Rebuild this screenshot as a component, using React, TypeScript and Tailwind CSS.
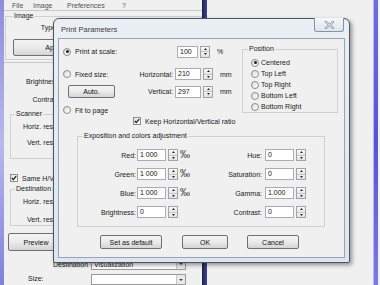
import { ReactNode } from "react";

const Radio = ({ checked = false }: { checked?: boolean }) => (
  <span className="flex h-[8px] w-[8px] shrink-0 items-center justify-center rounded-full border border-[#8c8c8c] bg-linear-to-br from-[#dcdcdc] to-white">
    {checked && <span className="h-[3px] w-[3px] rounded-full bg-[#1e1e1e]" />}
  </span>
);

const Check = () => (
  <span className="flex h-[8px] w-[8px] shrink-0 items-center justify-center border border-[#8e8f8f] bg-linear-to-br from-[#e2e2e2] to-white">
    <svg width="6" height="6" viewBox="0 0 6 6">
      <path d="M0.8 3 L2.3 4.6 L5.2 1.2" stroke="#1c1c1c" strokeWidth="1.3" fill="none" />
    </svg>
  </span>
);

const Arrows = () => (
  <div className="flex h-full w-[10px] shrink-0 flex-col border border-[#a3a3a3] bg-[#f4f4f4]">
    <div className="flex flex-1 items-center justify-center border-b border-[#c4c4c4] bg-linear-to-b from-[#fbfbfb] to-[#e6e6e6]">
      <svg width="3" height="2" viewBox="0 0 3 2">
        <path d="M1.5 0 L3 2 L0 2 Z" fill="#2a2a2a" />
      </svg>
    </div>
    <div className="flex flex-1 items-center justify-center bg-linear-to-b from-[#f4f4f4] to-[#e0e0e0]">
      <svg width="3" height="2" viewBox="0 0 3 2">
        <path d="M0 0 L3 0 L1.5 2 Z" fill="#2a2a2a" />
      </svg>
    </div>
  </div>
);

const Spin = ({ value, editClass }: { value: string; editClass: string }) => (
  <div className="flex h-[12px] shrink-0 gap-[2px]">
    <div className={"h-full border border-[#abadb3] bg-white pl-[2px] leading-[10px] text-[#111] " + editClass}>
      {value}
    </div>
    <Arrows />
  </div>
);

const Btn = ({ children, className }: { children: ReactNode; className: string }) => (
  <div
    className={
      "flex shrink-0 items-center justify-center rounded-[2px] border border-[#707070] bg-linear-to-b from-[#f3f3f3] via-[#ebebeb] to-[#d4d4d4] text-[#111] " +
      className
    }
  >
    {children}
  </div>
);

const Combo = ({ value }: { value: string }) => (
  <div className="flex h-[11px] w-[95px] items-center border border-[#9a9a9a] bg-white pl-[2px] text-[#222]">
    <span className="flex-1">{value}</span>
    <span className="flex h-full w-[9px] items-center justify-center border-l border-[#c8c8c8] bg-[#eaeaea]">
      <svg width="4" height="2" viewBox="0 0 4 2">
        <path d="M0 0 L4 0 L2 2 Z" fill="#444" />
      </svg>
    </span>
  </div>
);

const ColorRow = ({
  left,
  leftValue,
  unit,
  right,
  rightValue,
  className,
}: {
  left: string;
  leftValue: string;
  unit: boolean;
  right: string;
  rightValue: string;
  className: string;
}) => (
  <div className={"flex h-[12px] items-center " + className}>
    <div className="flex w-[125px] items-center">
      <span className="w-[53px] text-right">{left}</span>
      <div className="ml-[1px]">
        <Spin value={leftValue} editClass="w-[29px]" />
      </div>
      {unit && <span className="ml-[2px] text-[10px] leading-[10px] text-[#333]">‰</span>}
    </div>
    <span className="w-[54px] text-right">{right}</span>
    <div className="ml-[3px]">
      <Spin value={rightValue} editClass="w-[29px]" />
    </div>
  </div>
);

export default function App() {
  return (
    <div className="relative flex h-[285px] w-[380px] overflow-hidden bg-[#f0f0f0] font-['Liberation_Sans',Arial,sans-serif] text-[7px] leading-none text-[#1a1a1a]">
      {/* background application */}
      <div className="h-full w-[4px] shrink-0 bg-linear-to-b from-[#8d8fd8] via-[#b7b9ec] to-[#7f82d6]" />
      <div className="flex w-[198px] shrink-0 flex-col">
        <div className="flex h-[11px] items-center border-b border-[#c9c9c9] pl-[8px] text-[#505050]">
          <span className="w-[21px]">File</span>
          <span className="w-[34px]">Image</span>
          <span className="w-[55px]">Preferences</span>
          <span>?</span>
        </div>
        <fieldset className="ml-[1px] mt-[1px] border border-[#d0d0d0] px-[7px] pb-[3px]">
          <legend className="px-[1px] leading-[8px]">Image</legend>
          <div className="mt-[2px] flex h-[10px] items-center">
            <span className="w-[43px] text-right">Type</span>
          </div>
          <Btn className="mt-[7px] h-[17px] w-[82px]">Apply</Btn>
        </fieldset>
        <div className="mt-[2px] h-px bg-[#c8c8c8]" />
        <div className="mt-[13px] flex h-[10px] items-center">
          <span className="w-[55px] text-right">Brightness</span>
        </div>
        <div className="mt-[8px] flex h-[10px] items-center">
          <span className="w-[55px] text-right">Contrast</span>
        </div>
        <fieldset className="ml-[6px] mt-[6px] border border-[#d0d0d0] px-[4px] pb-[11px]">
          <legend className="px-[1px] leading-[8px]">Scanner</legend>
          <div className="mt-[3px] flex h-[10px] items-center pl-[8px]">Horiz. resolution</div>
          <div className="mt-[6px] flex h-[10px] items-center pl-[12px]">Vert. resolution</div>
        </fieldset>
        <div className="mt-[14px] flex h-[10px] items-center gap-[4px] pl-[6px]">
          <Check />
          <span>Same H/V resolution</span>
        </div>
        <fieldset className="ml-[6px] mt-[2px] border border-[#d0d0d0] px-[4px] pb-[1px]">
          <legend className="px-[1px] leading-[8px]">Destination</legend>
          <div className="mt-[3px] flex h-[10px] items-center pl-[8px]">Horiz. resolution</div>
          <div className="mt-[8px] flex h-[10px] items-center pl-[12px]">Vert. resolution</div>
        </fieldset>
        <Btn className="ml-[4px] mt-[7px] h-[18px] w-[56px]">Preview</Btn>
        <div className="mt-[8px] flex h-[10px] items-center">
          <span className="w-[87px] pl-[49px]">Destination</span>
          <Combo value="Visualization" />
        </div>
        <div className="mt-[5px] flex h-[10px] items-start">
          <span className="w-[85px] pl-[24px] pt-[1px]">Size:</span>
          <div className="ml-[2px]">
            <Combo value="" />
          </div>
        </div>
      </div>
      <div className="h-full w-[5px] shrink-0 bg-linear-to-r from-[#1c2040] via-[#2e3470] to-[#3d4290]" />
      <div className="h-full flex-1" />
      <div className="h-full w-[5px] shrink-0 border-l border-[#b8b6f0] bg-linear-to-b from-[#6f6ce0] via-[#5656d6] to-[#7c7ae2]" />
      <div className="h-full w-[2px] shrink-0" />

      {/* dialog window */}
      <div className="absolute left-[53px] top-[18px] flex h-[245px] w-[297px] flex-col rounded-t-[6px] rounded-b-[2px] border border-[#4d5561] bg-linear-to-b from-[#eaeff5] to-[#dde5ee] px-[4px] pb-[4px] shadow-[2px_2px_4px_rgba(0,0,0,0.4)]">
        <div className="flex h-[19px] shrink-0 items-start">
          <span className="ml-[3px] mt-[7px] text-[7.5px] text-[#3a3a3a]">Print Parameters</span>
          <div className="ml-auto mr-[1px] mt-[-1px] flex h-[14px] w-[30px] items-center justify-center rounded-b-[3px] border border-t-0 border-[#8593a4] bg-linear-to-b from-[#f5f7fa] to-[#dfe5ec]">
            <svg width="9" height="8" viewBox="0 0 9 8">
              <path
                d="M1 1 L8 7 M8 1 L1 7"
                stroke="#8a96a6"
                strokeWidth="2.2"
                strokeLinecap="square"
              />
              <path d="M1 1 L8 7 M8 1 L1 7" stroke="#f4f6f8" strokeWidth="0.9" />
            </svg>
          </div>
        </div>
        <div className="flex flex-1 flex-col border border-[#98a4b4] bg-[#f0f0f0]">
          {/* top block */}
          <div className="flex">
            <div className="flex w-[183px] flex-col pl-[4px] pt-[6px]">
              <div className="flex h-[13px] items-center">
                <div className="flex w-[114px] items-center gap-[4px]">
                  <Radio checked />
                  <span>Print at scale:</span>
                </div>
                <Spin value="100" editClass="w-[21px]" />
                <span className="ml-[7px]">%</span>
              </div>
              <div className="mt-[10px] flex h-[12px] items-center">
                <div className="flex w-[70px] items-center gap-[4px]">
                  <Radio />
                  <span>Fixed size:</span>
                </div>
                <span className="w-[40px] text-right">Horizontal:</span>
                <div className="ml-[2px]">
                  <Spin value="210" editClass="w-[26px]" />
                </div>
                <span className="ml-[7px]">mm</span>
              </div>
              <div className="mt-[5px] flex h-[13px] items-center">
                <Btn className="ml-[5px] h-[13px] w-[47px]">Auto.</Btn>
                <span className="w-[58px] text-right">Vertical:</span>
                <div className="ml-[2px]">
                  <Spin value="297" editClass="w-[26px]" />
                </div>
                <span className="ml-[7px]">mm</span>
              </div>
              <div className="mt-[6px] flex h-[12px] items-center gap-[4px]">
                <Radio />
                <span>Fit to page</span>
              </div>
              <div className="flex h-[10px] items-center gap-[4px] pl-[70px]">
                <Check />
                <span>Keep Horizontal/Vertical ratio</span>
              </div>
            </div>
            <fieldset className="mt-[6px] h-[68px] w-[96px] border border-[#d0d0d0] px-[5px]">
              <legend className="px-[1px] leading-[8px]">Position</legend>
              <div className="mt-[4px] flex flex-col">
                {["Centered", "Top Left", "Top Right", "Bottom Left", "Bottom Right"].map((label, i) => (
                  <div key={label} className="flex h-[11px] items-center gap-[2px] pl-[3px]">
                    <Radio checked={i === 0} />
                    <span>{label}</span>
                  </div>
                ))}
              </div>
            </fieldset>
          </div>

          {/* exposition group */}
          <fieldset className="ml-[18px] mt-[6px] h-[95px] w-[248px] border border-[#d0d0d0] px-[5px]">
            <legend className="px-[1px] leading-[8px]">Exposition and colors adjustment</legend>
            <ColorRow className="mt-[9px]" left="Red:" leftValue="1 000" unit right="Hue:" rightValue="0" />
            <ColorRow className="mt-[7px]" left="Green:" leftValue="1 000" unit right="Saturation:" rightValue="0" />
            <ColorRow className="mt-[7px]" left="Blue:" leftValue="1 000" unit right="Gamma:" rightValue="1.000" />
            <ColorRow className="mt-[7px]" left="Brightness:" leftValue="0" unit={false} right="Contrast:" rightValue="0" />
          </fieldset>

          {/* buttons */}
          <div className="mt-[8px] flex">
            <Btn className="ml-[41px] h-[14px] w-[62px]">Set as default</Btn>
            <Btn className="ml-[20px] h-[14px] w-[46px]">OK</Btn>
            <Btn className="ml-[19px] h-[14px] w-[52px]">Cancel</Btn>
          </div>
        </div>
      </div>
    </div>
  );
}
